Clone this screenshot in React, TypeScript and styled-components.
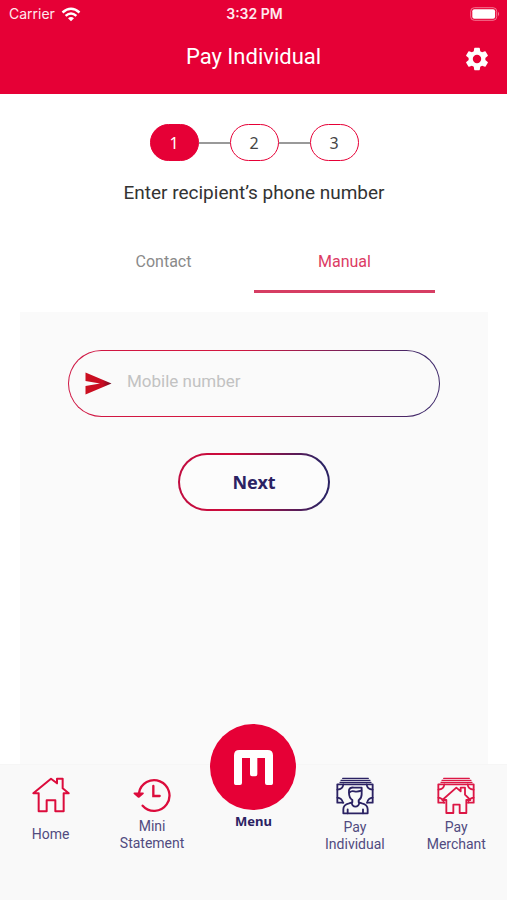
import React from "react";
import styled, { createGlobalStyle } from "styled-components";

const red = "#e60036";
const navy = "#2b2263";
const gradient = "linear-gradient(90deg, #cf1643 0%, #d4163f 45%, #3d2769 95%)";
const buttonGradient = "linear-gradient(90deg, #c00c40 0%, #d00b3a 35%, #2b2263 95%)";

const GlobalStyle = createGlobalStyle`
  *, *::before, *::after { box-sizing: border-box; }
  body { margin: 0; background: #fff; }
  button, input { font: inherit; }
`;

const Page = styled.div`
  display: flex;
  flex-direction: column;
  min-height: 100vh;
  font-family: "Noto Sans", sans-serif;
  color: #333;
`;

const Header = styled.header`
  background: ${red};
  color: #fff;
  padding-bottom: 17px;
`;

const StatusBar = styled.div`
  display: grid;
  grid-template-columns: 1fr auto 1fr;
  align-items: center;
  height: 28px;
  padding: 0 7px 0 9px;
  font: 14px/20px Inter, sans-serif;
  color: #ffe9ee;
`;

const Carrier = styled.span`
  display: flex;
  align-items: center;
  gap: 6px;
`;

const Clock = styled.time`
  font-weight: 600;
`;

const BatterySlot = styled.span`
  display: flex;
  justify-content: flex-end;
`;

const TitleBar = styled.div`
  display: grid;
  grid-template-columns: 1fr auto 1fr;
  align-items: center;
  height: 49px;
  padding: 8px 16px 0;
`;

const Title = styled.h1`
  grid-column: 2;
  margin: 0;
  font: 400 22px/32px Roboto, sans-serif;
`;

const SettingsButton = styled.button`
  justify-self: end;
  display: flex;
  padding: 0;
  margin-top: 4px;
  border: 0;
  background: none;
  color: inherit;
`;

const Main = styled.main`
  flex: 1;
  display: flex;
  flex-direction: column;
  padding: 30px 19px 0 20px;
`;

const Steps = styled.ol`
  display: flex;
  justify-content: center;
  align-items: center;
  margin: 0;
  padding: 0;
  list-style: none;
`;

const Step = styled.li<{ $active?: boolean }>`
  display: flex;
  align-items: center;
  justify-content: center;
  width: 49px;
  height: 37px;
  border: 1px solid ${red};
  border-radius: 19px;
  background: ${(p) => (p.$active ? red : "#fff")};
  color: ${(p) => (p.$active ? "#fff" : "#444")};
  font-size: 16px;
`;

const StepLine = styled.li`
  width: 31px;
  height: 2px;
  background: #999;
`;

const Prompt = styled.h2`
  margin: 18px 0 0;
  text-align: center;
  font: 400 19px/28px Roboto, sans-serif;
`;

const Tabs = styled.div`
  display: grid;
  grid-template-columns: 1fr 1fr;
  width: 100%;
  max-width: 362px;
  margin: 26px auto 0;
`;

const Tab = styled.button<{ $active?: boolean }>`
  height: 60px;
  padding: 0;
  border: 0;
  border-bottom: 3px solid ${(p) => (p.$active ? "#d63d63" : "transparent")};
  background: none;
  color: ${(p) => (p.$active ? "#dc3c64" : "#8a8a8a")};
  font: 400 16px/24px Roboto, sans-serif;
`;

const Panel = styled.form`
  flex: 1;
  display: flex;
  flex-direction: column;
  align-items: center;
  gap: 36px;
  margin-top: 19px;
  padding: 38px 48px;
  background: #fafafa;
`;

const Field = styled.label`
  display: flex;
  align-items: center;
  gap: 15px;
  width: 100%;
  height: 67px;
  padding: 0 24px 0 16px;
  border: 1px solid transparent;
  border-radius: 34px;
  background: linear-gradient(#fafafa, #fafafa) padding-box, ${gradient} border-box;
`;

const NumberInput = styled.input`
  flex: 1;
  min-width: 0;
  padding: 0 0 5px;
  border: 0;
  outline: 0;
  background: none;
  color: #333;
  font: 400 17px/24px Roboto, sans-serif;
  &::placeholder { color: #c2c2c2; opacity: 1; }
`;

const NextButton = styled.button`
  width: 152px;
  height: 58px;
  border: 2px solid transparent;
  border-radius: 29px;
  background: linear-gradient(#fcfcfc, #fcfcfc) padding-box, ${buttonGradient} border-box;
  color: ${navy};
  font: 700 18px/28px "Noto Sans", sans-serif;
`;

const Nav = styled.nav`
  display: grid;
  grid-template-columns: repeat(5, 1fr);
  min-height: 136px;
  border-top: 1px solid #f6f6f6;
  background: #f9f9f9;
`;

const NavItem = styled.a<{ $gap: number }>`
  display: flex;
  flex-direction: column;
  align-items: center;
  gap: ${(p) => p.$gap}px;
  padding-top: 12px;
  color: #514b80;
  font: 400 14px/17px Roboto, sans-serif;
  text-align: center;
  text-decoration: none;
`;

const MenuItem = styled(NavItem)`
  padding-top: 0;
  color: ${navy};
  font: 700 13px/16px "Noto Sans", sans-serif;
`;

const MenuDisc = styled.span`
  display: flex;
  align-items: center;
  justify-content: center;
  width: 86px;
  height: 86px;
  margin-top: -41px;
  border-radius: 50%;
  background: ${red};
`;

const WifiIcon = () => (
  <svg width="20" height="15" viewBox="0 0 20 15" aria-hidden="true">
    <g fill="none" stroke="#fff" strokeWidth="2.4">
      <path d="M1.5 5.5 Q10 -2.2 18.5 5.5" />
      <path d="M4.6 8.8 Q10 4 15.4 8.8" />
    </g>
    <path d="M7 11.3 Q10 8.8 13 11.3 L10 14.2Z" fill="#fff" />
  </svg>
);

const BatteryIcon = () => (
  <svg width="30" height="14" viewBox="0 0 30 14" role="img" aria-label="Battery full">
    <rect x="0.7" y="0.7" width="26" height="12.6" rx="3.6" fill="none" stroke="#f47592" />
    <rect x="2.3" y="2.3" width="22.8" height="9.4" rx="2" fill="#fff" />
    <path d="M28 4.8 Q30.2 7 28 9.2Z" fill="#f47592" />
  </svg>
);

const GearIcon = () => (
  <svg width="28" height="28" viewBox="0 0 24 24" fill="currentColor" aria-hidden="true">
    <path d="M19.14 12.94c.04-.3.06-.61.06-.94s-.02-.64-.07-.94l2.03-1.58a.49.49 0 0 0 .12-.61l-1.92-3.32a.49.49 0 0 0-.59-.22l-2.39.96a7 7 0 0 0-1.62-.94l-.36-2.54A.48.48 0 0 0 13.92 2.4h-3.84a.48.48 0 0 0-.48.41l-.36 2.54a7.3 7.3 0 0 0-1.62.94l-2.39-.96a.48.48 0 0 0-.59.22L2.72 8.87a.48.48 0 0 0 .12.61l2.03 1.58c-.05.3-.07.62-.07.94s.02.64.07.94l-2.03 1.58a.49.49 0 0 0-.12.61l1.92 3.32c.12.22.37.3.59.22l2.39-.96c.5.38 1.03.7 1.62.94l.36 2.54c.05.24.24.41.48.41h3.84c.24 0 .44-.17.47-.41l.36-2.54a7 7 0 0 0 1.62-.94l2.39.96c.22.08.47 0 .59-.22l1.92-3.32a.48.48 0 0 0-.12-.61ZM12 15.6A3.6 3.6 0 1 1 12 8.4a3.6 3.6 0 0 1 0 7.2Z" />
  </svg>
);

const SendIcon = () => (
  <svg width="27" height="23" viewBox="0 0 27 23" aria-hidden="true">
    <defs>
      <linearGradient id="send">
        <stop offset="0" stopColor="#cb1020" />
        <stop offset="0.65" stopColor="#c80b22" />
        <stop offset="1" stopColor="#6b0b24" />
      </linearGradient>
    </defs>
    <path d="M0.5 0.5 L26.5 11.5 L0.5 22.5 V14 L15 11.5 L0.5 9Z" fill="url(#send)" />
  </svg>
);

const HomeIcon = () => (
  <svg width="38" height="36" viewBox="98 84 114 108" fill="none" stroke="#dc0c3c" strokeWidth="6" strokeLinejoin="round" aria-hidden="true">
    <path d="M102 133 L155 89 L173 103 V89 H190 V118 L208 133 H193 V187 H168 V154 H142 V187 H118 V133Z" />
  </svg>
);

const HistoryIcon = () => (
  <svg width="38" height="36" viewBox="402 84 114 108" fill="none" stroke="#dc0c3c" strokeWidth="7" strokeLinecap="round" aria-hidden="true">
    <path d="M431 170 A46 46 0 1 0 420 132" />
    <path d="M463 111 V141 H482" />
    <path d="M406 133 L419 144 L432 133Z" fill="#dc0c3c" strokeLinejoin="round" strokeWidth="5" />
  </svg>
);

const Banknotes = () => (
  <>
    <path d="M98 85 H175 M93 91 H180 M90 97 H183" strokeWidth="4" />
    <path d="M100 158 H82 V103 H188 V158 H172" />
    <path d="M100 103 Q99 117 82 119 M170 103 Q171 117 188 119 M82 143 Q95 144 99 158 M188 143 Q175 144 171 158" strokeWidth="5" />
  </>
);

const IndividualIcon = () => (
  <svg width="38" height="38" viewBox="78 81 114 114" fill="none" stroke={navy} strokeWidth="5.5" strokeLinejoin="round" strokeLinecap="round" aria-hidden="true">
    <Banknotes />
    <path d="M100 190 V178 Q100 164 117 160 L127 157 V150 Q117 143 117 128 V120 Q120 111 132 113 H155 V133 Q155 145 146 151 V157 L156 160 Q173 164 173 178 V190Z" fill="#f9f9f9" />
    <path d="M118 128 Q123 122 133 124 T154 122 M125 158 Q127 170 136 170 Q146 170 148 158 M113 178 V190 M159 178 V190" />
  </svg>
);

const MerchantIcon = () => (
  <svg width="38" height="38" viewBox="78 81 114 114" fill="none" stroke="#dc1745" strokeWidth="5.5" strokeLinejoin="round" strokeLinecap="round" aria-hidden="true">
    <Banknotes />
    <path d="M94 150 L136 113 L149 124 V113 H162 V134 L178 150 H166 V189 H146 V164 H127 V189 H106 V150Z" fill="#f9f9f9" />
  </svg>
);

const Logo = () => (
  <svg width="39" height="35" viewBox="103 103 117 105" aria-hidden="true">
    <path fill="#fff" d="M119 103 H204 Q220 103 220 119 V203 Q220 208 215 208 H202 Q196 208 196 202 V127 H173 V176 Q173 182 167 182 H157 Q151 182 151 176 V127 H127 V202 Q127 208 121 208 H108 Q103 208 103 203 V119 Q103 103 119 103Z" />
  </svg>
);

export default function App() {
  return (
    <Page>
      <GlobalStyle />
      <Header>
        <StatusBar>
          <Carrier>Carrier <WifiIcon /></Carrier>
          <Clock>3:32 PM</Clock>
          <BatterySlot><BatteryIcon /></BatterySlot>
        </StatusBar>
        <TitleBar>
          <Title>Pay Individual</Title>
          <SettingsButton type="button" aria-label="Settings"><GearIcon /></SettingsButton>
        </TitleBar>
      </Header>
      <Main>
        <Steps>
          <Step $active aria-current="step">1</Step>
          <StepLine aria-hidden="true" />
          <Step>2</Step>
          <StepLine aria-hidden="true" />
          <Step>3</Step>
        </Steps>
        <Prompt>Enter recipient’s phone number</Prompt>
        <Tabs role="tablist">
          <Tab type="button" role="tab" aria-selected={false}>Contact</Tab>
          <Tab type="button" role="tab" aria-selected $active>Manual</Tab>
        </Tabs>
        <Panel onSubmit={(e) => e.preventDefault()}>
          <Field>
            <SendIcon />
            <NumberInput type="tel" aria-label="Mobile number" placeholder="Mobile number" />
          </Field>
          <NextButton type="submit">Next</NextButton>
        </Panel>
      </Main>
      <Nav>
        <NavItem href="#home" $gap={13}><HomeIcon />Home</NavItem>
        <NavItem href="#statement" $gap={5}><HistoryIcon /><span>Mini<br />Statement</span></NavItem>
        <MenuItem href="#menu" $gap={3}><MenuDisc><Logo /></MenuDisc>Menu</MenuItem>
        <NavItem href="#individual" $gap={4}><IndividualIcon /><span>Pay<br />Individual</span></NavItem>
        <NavItem href="#merchant" $gap={4}><MerchantIcon /><span>Pay<br />Merchant</span></NavItem>
      </Nav>
    </Page>
  );
}
